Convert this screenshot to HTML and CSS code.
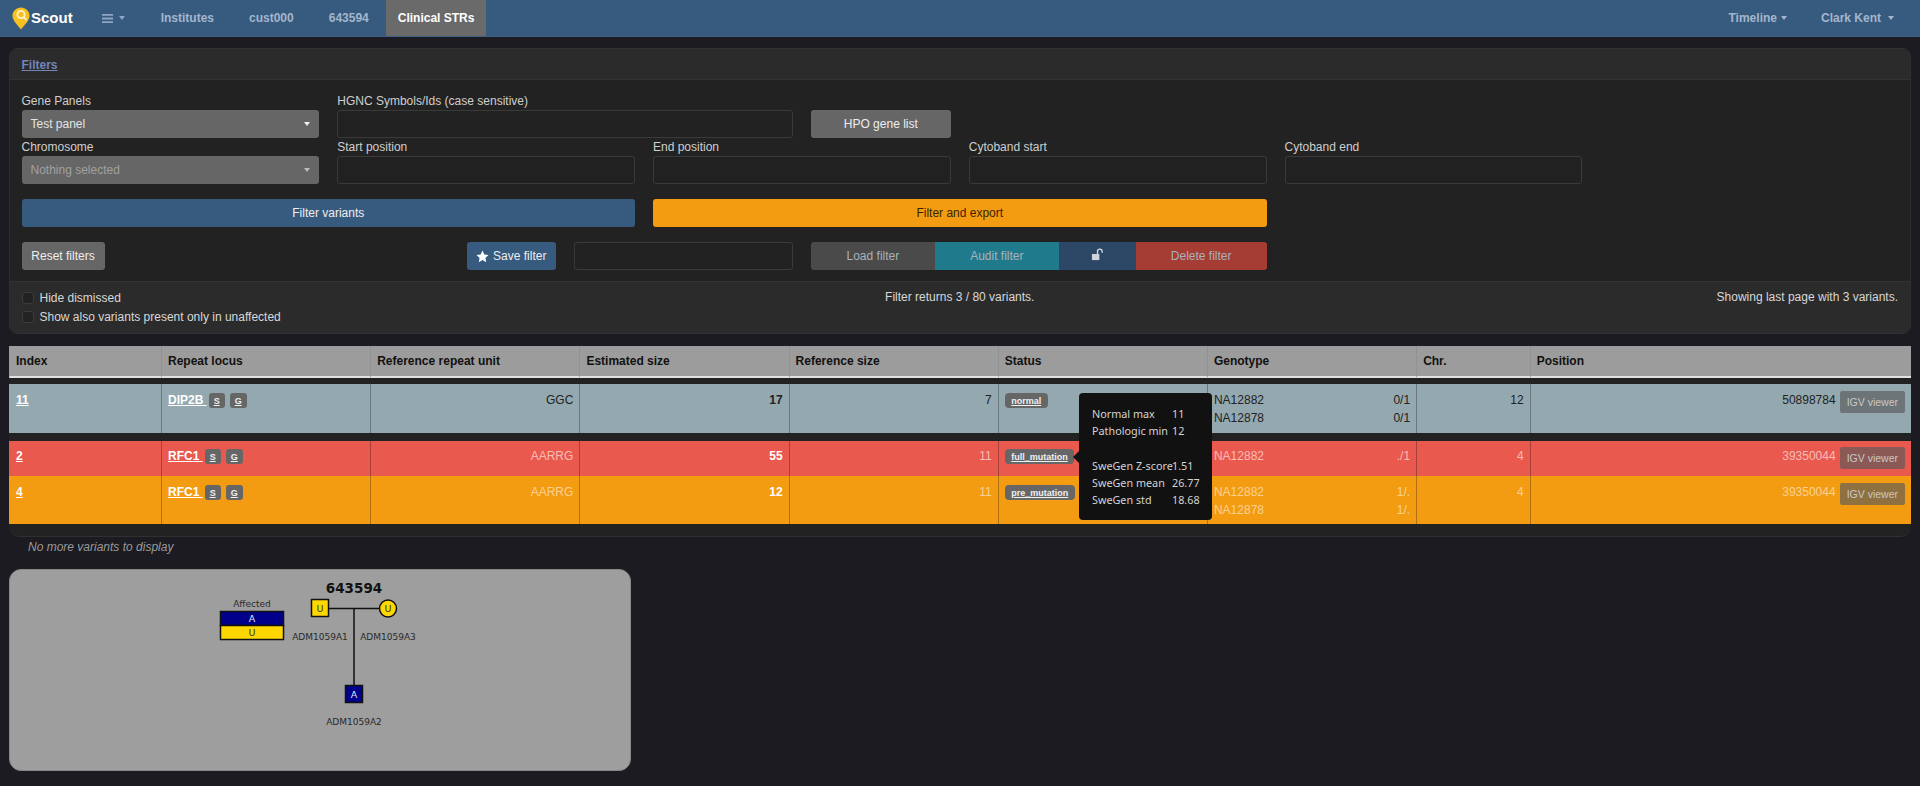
FILE: index.html
```html
<!DOCTYPE html>
<html lang="en">

<head>
    <meta charset="UTF-8">
    <meta name="viewport" content="width=device-width, initial-scale=1.0">
    <title>Scout - Clinical STRs</title>
    <link rel="stylesheet" href="styles.css">
</head>

<body>
    <!-- Top navigation -->
    <nav class="navbar">
        <a class="brand" href="#">
            <svg class="brand-pin" width="18" height="23" viewBox="0 0 18 23">
                <path d="M9 .5C4.2.5.5 4.2.5 8.8c0 4.6 4.4 8.6 8.5 13.7 4.1-5.1 8.5-9.100 8.500-13.700C17.500 4.200 13.800.5 9 .5z" fill="#f6c021"/>
                <circle cx="9" cy="7.500" r="3.600" fill="none" stroke="#fff4c8" stroke-width="1.800"/>
                <path d="M11.500 10l3 2.800" stroke="#fff4c8" stroke-width="1.800"/>
            </svg>
            <span>Scout</span>
        </a>
        <a class="menu-toggle" href="#">
            <svg width="11" height="11" viewBox="0 0 11 11">
                <path d="M0 1h11v1.800H0zM0 4.600h11v1.800H0zM0 8.200h11V10H0z" fill="#8fa6c2"/>
            </svg>
            <span class="caret"></span>
        </a>
        <a class="nav-link" href="#">Institutes</a>
        <a class="nav-link" href="#">cust000</a>
        <a class="nav-link" href="#">643594</a>
        <a class="nav-link active" href="#">Clinical STRs</a>
        <a class="nav-link nav-right" href="#">Timeline<span class="caret"></span></a>
        <a class="nav-link nav-user" href="#">Clark Kent<span class="caret"></span></a>
    </nav>

    <!-- Filter form -->
    <section class="card filters">
        <div class="card-header"><a href="#">Filters</a></div>
        <div class="card-body">
            <div class="form-row">
                <div class="field span-2">
                    <label>Gene Panels</label>
                    <div class="select">Test panel<span class="caret"></span></div>
                </div>
                <div class="field span-3">
                    <label>HGNC Symbols/Ids (case sensitive)</label>
                    <input type="text">
                </div>
                <div class="field span-1">
                    <label>&nbsp;</label>
                    <button class="btn btn-grey">HPO gene list</button>
                </div>
            </div>
            <div class="form-row">
                <div class="field span-2">
                    <label>Chromosome</label>
                    <div class="select disabled">Nothing selected<span class="caret"></span></div>
                </div>
                <div class="field span-2">
                    <label>Start position</label>
                    <input type="text">
                </div>
                <div class="field span-2">
                    <label>End position</label>
                    <input type="text">
                </div>
                <div class="field span-2">
                    <label>Cytoband start</label>
                    <input type="text">
                </div>
                <div class="field span-2">
                    <label>Cytoband end</label>
                    <input type="text">
                </div>
            </div>
            <div class="form-row action-row">
                <button class="btn btn-blue span-4">Filter variants</button>
                <button class="btn btn-orange span-4">Filter and export</button>
            </div>
            <div class="form-row action-row">
                <div class="span-2"><button class="btn btn-grey reset-btn">Reset filters</button></div>
                <div class="span-3 save-group">
                    <div class="save-cell">
                        <button class="btn btn-blue save-btn">
                            <svg width="13" height="13" viewBox="0 0 24 24">
                                <path d="M12 1l3.400 7.200 7.600 1-5.600 5.400 1.500 7.900L12 18.600l-6.900 3.900 1.500-7.900L1 9.200l7.600-1z" fill="#fff"/>
                            </svg>
                            Save filter
                        </button>
                    </div>
                    <input type="text">
                </div>
                <div class="btn-group span-3">
                    <button class="btn btn-dim load-btn">Load filter</button>
                    <button class="btn btn-teal audit-btn">Audit filter</button>
                    <button class="btn btn-navy lock-btn">
                        <svg width="13" height="13" viewBox="0 0 14 14">
                            <path d="M1 6.500h8v6.500H1z" fill="#cfd6de"/>
                            <path d="M7 6.500V3.600C7 2.100 8.100 1.200 9.500 1.200s2.500.9 2.500 2.400V5" fill="none" stroke="#cfd6de" stroke-width="1.500"/>
                        </svg>
                    </button>
                    <button class="btn btn-red delete-btn">Delete filter</button>
                </div>
            </div>
        </div>
        <div class="card-footer">
            <div class="footer-checks">
                <label class="check"><span class="checkbox"></span>Hide dismissed</label>
                <label class="check"><span class="checkbox"></span>Show also variants present only in unaffected</label>
            </div>
            <div class="footer-count">Filter returns 3 / 80 variants.</div>
            <div class="footer-page">Showing last page with 3 variants.</div>
        </div>
    </section>

    <!-- Variants table -->
    <section class="card table-card">
        <table class="variants">
            <colgroup>
                <col class="col-index">
                <col class="col-wide">
                <col class="col-wide">
                <col class="col-wide">
                <col class="col-wide">
                <col class="col-wide">
                <col class="col-wide">
                <col class="col-chr">
                <col>
            </colgroup>
            <thead>
                <tr>
                    <th>Index</th>
                    <th>Repeat locus</th>
                    <th>Reference repeat unit</th>
                    <th>Estimated size</th>
                    <th>Reference size</th>
                    <th>Status</th>
                    <th>Genotype</th>
                    <th>Chr.</th>
                    <th>Position</th>
                </tr>
            </thead>
            <tbody>
                <tr class="spacer-sm"><td colspan="9"></td></tr>
                <tr class="row-normal">
                    <td><a class="cell-link" href="#">11</a></td>
                    <td><a class="cell-link" href="#">DIP2B&nbsp;</a><a class="tag" href="#">S</a><a class="tag" href="#">G</a></td>
                    <td class="num">GGC</td>
                    <td class="num"><strong>17</strong></td>
                    <td class="num">7</td>
                    <td><a class="badge" href="#">normal</a></td>
                    <td>
                        <div class="geno"><span>NA12882</span><span>0/1</span></div>
                        <div class="geno"><span>NA12878</span><span>0/1</span></div>
                    </td>
                    <td class="num">12</td>
                    <td class="num">50898784<a class="igv" href="#">IGV viewer</a></td>
                </tr>
                <tr class="spacer-lg"><td colspan="9"></td></tr>
                <tr class="row-full">
                    <td><a class="cell-link" href="#">2</a></td>
                    <td><a class="cell-link" href="#">RFC1&nbsp;</a><a class="tag" href="#">S</a><a class="tag" href="#">G</a></td>
                    <td class="num">AARRG</td>
                    <td class="num"><strong>55</strong></td>
                    <td class="num">11</td>
                    <td><a class="badge" href="#">full_mutation</a></td>
                    <td>
                        <div class="geno"><span>NA12882</span><span>./1</span></div>
                    </td>
                    <td class="num">4</td>
                    <td class="num">39350044<a class="igv" href="#">IGV viewer</a></td>
                </tr>
                <tr class="row-pre">
                    <td><a class="cell-link" href="#">4</a></td>
                    <td><a class="cell-link" href="#">RFC1&nbsp;</a><a class="tag" href="#">S</a><a class="tag" href="#">G</a></td>
                    <td class="num">AARRG</td>
                    <td class="num"><strong>12</strong></td>
                    <td class="num">11</td>
                    <td><a class="badge" href="#">pre_mutation</a></td>
                    <td>
                        <div class="geno"><span>NA12882</span><span>1/.</span></div>
                        <div class="geno"><span>NA12878</span><span>1/.</span></div>
                    </td>
                    <td class="num">4</td>
                    <td class="num">39350044<a class="igv" href="#">IGV viewer</a></td>
                </tr>
            </tbody>
        </table>

        <div class="tooltip">
            <div class="tip-row"><span>Normal max</span><span>11</span></div>
            <div class="tip-row"><span>Pathologic min</span><span>12</span></div>
            <div class="tip-row">&nbsp;</div>
            <div class="tip-row"><span>SweGen Z-score</span><span>1.51</span></div>
            <div class="tip-row"><span>SweGen mean</span><span>26.77</span></div>
            <div class="tip-row"><span>SweGen std</span><span>18.68</span></div>
        </div>
    </section>

    <p class="no-more">No more variants to display</p>

    <!-- Pedigree -->
    <section class="pedigree">
        <svg width="622" height="202" viewBox="0 0 622 202">
            <text class="ped-title" x="345" y="24">643594</text>

            <text class="ped-label" x="243" y="38">Affected</text>
            <rect x="211.500" y="42.500" width="63" height="14" fill="#00008b" stroke="#111" stroke-width="1.500"/>
            <rect x="211.500" y="56.500" width="63" height="14" fill="#ffd700" stroke="#111" stroke-width="1.500"/>
            <text class="ped-mark light" x="243" y="53">A</text>
            <text class="ped-mark" x="243" y="67">U</text>

            <path d="M320 39.500h59M345 39.500v77" stroke="#111" stroke-width="1.500" fill="none"/>

            <rect x="302.500" y="30.500" width="17" height="17" fill="#ffd700" stroke="#111" stroke-width="1.500"/>
            <text class="ped-mark" x="311" y="43">U</text>
            <circle cx="379" cy="39.500" r="8.500" fill="#ffd700" stroke="#111" stroke-width="1.500"/>
            <text class="ped-mark" x="379" y="43">U</text>
            <rect x="336.500" y="116.500" width="17" height="17" fill="#00008b" stroke="#111" stroke-width="1.500"/>
            <text class="ped-mark light" x="345" y="129">A</text>

            <text class="ped-label" x="311" y="71">ADM1059A1</text>
            <text class="ped-label" x="379" y="71">ADM1059A3</text>
            <text class="ped-label" x="345" y="156">ADM1059A2</text>
        </svg>
    </section>
</body>

</html>
```
FILE: styles.css
```css
* {
    box-sizing: border-box;
}

body {
    font-family: "Liberation Sans", Arial, sans-serif;
    font-size: 12px;
    line-height: 18px;
    background-color: #1b1b21;
    color: #d8d8d8;
    margin: 0;
    padding: 0 9px 16px;
}

a {
    color: inherit;
}

.caret {
    display: inline-block;
    width: 0;
    height: 0;
    border-top: 4px solid currentColor;
    border-left: 3.5px solid transparent;
    border-right: 3.5px solid transparent;
}

/* Navbar */
.navbar {
    display: flex;
    align-items: center;
    height: 37px;
    margin: 0 -9px;
    padding-left: 12px;
    background-color: #375a7f;
    border-bottom: 1px solid #3f6286;
}

.brand {
    display: flex;
    align-items: center;
    gap: 1px;
    color: #fff;
    font-size: 15px;
    font-weight: bold;
    text-decoration: none;
}

.menu-toggle {
    display: flex;
    align-items: center;
    gap: 6px;
    margin-left: 29px;
    margin-right: 24px;
    color: #8fa6c2;
}

.nav-link {
    display: flex;
    align-items: center;
    height: 36px;
    padding: 0 12px;
    margin-right: 11px;
    color: #a3b6cc;
    font-weight: bold;
    text-decoration: none;
}

.nav-link .caret {
    margin-left: 4px;
}

.nav-link.active {
    margin-left: -6px;
    color: #fff;
    background-color: #6a6a6a;
}

.nav-right {
    margin-left: auto;
    margin-right: 10px;
}

.nav-user {
    margin-right: 14px;
}

.nav-user .caret {
    margin-left: 7px;
}

/* Cards */
.card {
    background-color: #222;
    border: 1px solid #303030;
    border-radius: 8px;
}

.filters {
    margin-top: 11px;
}

.card-header {
    height: 31px;
    padding: 7px 11.500px 0;
    background-color: #2b2b2b;
    border-bottom: 1px solid #333;
    border-radius: 8px 8px 0 0;
}

.card-header a {
    color: #7285bb;
    font-weight: bold;
}

.card-body {
    padding: 12px 12px 11px 11.500px;
}

.form-row {
    display: grid;
    grid-template-columns: repeat(12, 1fr);
    column-gap: 18px;
}

.action-row {
    margin-top: 15px;
}

.span-1 {
    grid-column: span 1;
}

.span-2 {
    grid-column: span 2;
}

.span-3 {
    grid-column: span 3;
}

.span-4 {
    grid-column: span 4;
}

.field label {
    display: block;
    height: 18px;
    color: #cfcfcf;
}

input[type="text"] {
    display: block;
    width: 100%;
    height: 28px;
    background-color: #212121;
    border: 1px solid #3a3a3a;
    border-radius: 3px;
}

.select {
    display: flex;
    align-items: center;
    justify-content: space-between;
    height: 28px;
    padding: 0 9px;
    background-color: #666;
    border-radius: 3px;
    color: #e4e4e4;
}

.select .caret {
    color: #f0f0f0;
}

.select.disabled {
    color: #a0a0a0;
}

.select.disabled .caret {
    color: #bbb;
}

.btn {
    height: 28px;
    padding: 0 9px;
    border: none;
    border-radius: 3px;
    font-family: inherit;
    font-size: 12px;
    color: #eee;
    white-space: nowrap;
}

.field .btn {
    width: 100%;
}

.btn-grey {
    background-color: #666;
}

.btn-blue {
    background-color: #375a7f;
}

.btn-orange {
    background-color: #f39c12;
    color: #3a2400;
}

.reset-btn {
    width: 83px;
}

.save-group {
    display: grid;
    grid-template-columns: 1fr 1fr;
    column-gap: 18px;
}

.save-cell {
    text-align: right;
}

.save-btn {
    display: inline-flex;
    align-items: center;
    gap: 4px;
    width: 89px;
}

.btn-group {
    display: flex;
}

.btn-group .btn {
    border-radius: 0;
    color: #a9b2ba;
}

.btn-group .btn:first-child {
    border-radius: 3px 0 0 3px;
}

.btn-group .btn:last-child {
    border-radius: 0 3px 3px 0;
}

.btn-dim {
    background-color: #4a4a4a;
}

.btn-teal {
    background-color: #1f7a8c;
}

.btn-navy {
    background-color: #2c4866;
}

.btn-red {
    background-color: #a63d35;
}

.load-btn,
.audit-btn {
    width: 124px;
}

.lock-btn {
    width: 77px;
}

.delete-btn {
    flex: 1;
}

.card-footer {
    display: grid;
    grid-template-columns: 1fr 1fr 1fr;
    height: 52px;
    padding: 6px 12px 0 11.500px;
    background-color: #2b2b2b;
    border-top: 1px solid #333;
    border-radius: 0 0 8px 8px;
}

.check {
    display: flex;
    align-items: center;
    gap: 6px;
    height: 19.500px;
    white-space: nowrap;
}

.checkbox {
    width: 12px;
    height: 12px;
    background-color: #222;
    border: 1px solid #3c3c3c;
    border-radius: 3px;
}

.footer-count {
    text-align: center;
    line-height: 19.500px;
}

.footer-page {
    text-align: right;
    line-height: 19.500px;
}

/* Variants table */
.table-card {
    position: relative;
    margin-top: 12px;
    padding-bottom: 12px;
    border-radius: 3px 3px 10px 10px;
    border-width: 0 0 1px;
}

.variants {
    width: 100%;
    table-layout: fixed;
    border-collapse: separate;
    border-spacing: 0;
    color: #222;
}

.col-index {
    width: 152px;
}

.col-wide {
    width: 209.200px;
}

.col-chr {
    width: 113.500px;
}

.variants th {
    height: 32px;
    padding: 0 6px;
    text-align: left;
    color: #111;
    background-color: #9c9c9c;
    border-left: 1px solid #919191;
    border-bottom: 2px solid #e2e2e2;
}

.variants td {
    padding: 7px 6px 0;
    vertical-align: top;
    border-left: 1px solid rgba(0, 0, 0, 0.28);
}

.variants th:first-child,
.variants td:first-child {
    border-left-color: transparent;
}

.variants .spacer-sm td,
.variants .spacer-lg td {
    padding: 0;
    border: none;
}

.spacer-sm td {
    height: 6px;
}

.spacer-lg td {
    height: 8px;
}

.row-normal td {
    height: 49px;
    background-color: #94a8b0;
}

.row-full td {
    height: 35px;
    padding-top: 6px;
    background-color: #e9594d;
    color: rgba(255, 255, 255, 0.6);
}

.row-pre td {
    height: 48px;
    padding-top: 7px;
    background-color: #f39c12;
    color: rgba(255, 255, 255, 0.55);
}

.row-full strong,
.row-pre strong {
    color: #fff;
}

.num {
    text-align: right;
}

.cell-link {
    color: #fff;
    font-weight: bold;
}

.tag {
    display: inline-block;
    height: 15px;
    margin-left: 5px;
    margin-top: 2px;
    padding: 0 5px;
    background-color: #666;
    border-radius: 3px;
    color: #f0f0f0;
    font-size: 9px;
    font-weight: bold;
    line-height: 16px;
    text-align: center;
    vertical-align: top;
}

.cell-link + .tag {
    margin-left: 2px;
}

.badge {
    display: inline-block;
    height: 15px;
    margin-top: 2px;
    padding: 0 6.500px;
    background-color: #666;
    border-radius: 4px;
    color: #f0f0f0;
    font-size: 9px;
    font-weight: bold;
    line-height: 16px;
    vertical-align: top;
}

.geno {
    display: flex;
    justify-content: space-between;
}

.igv {
    display: inline-block;
    height: 22px;
    margin-left: 4px;
    padding: 0 7px;
    background-color: rgba(90, 90, 90, 0.66);
    border-radius: 2px;
    color: #c8c8c8;
    font-size: 10.5px;
    line-height: 23px;
    text-decoration: none;
    vertical-align: top;
}

.tooltip {
    position: absolute;
    top: 47px;
    left: 1070px;
    width: 133px;
    height: 127px;
    padding: 12px 0 0 13px;
    background-color: #111;
    border-radius: 4px;
    color: #d4d4d4;
    font-family: "Noto Sans", sans-serif;
    font-size: 10.800px;
    line-height: 17.300px;
}

.tooltip::before {
    content: "";
    position: absolute;
    top: 58px;
    left: -6px;
    border-top: 6px solid transparent;
    border-bottom: 6px solid transparent;
    border-right: 6px solid #111;
}

.tip-row {
    display: grid;
    grid-template-columns: 80px auto;
    white-space: nowrap;
}

.no-more {
    height: 18px;
    margin: 1px 0 13px;
    padding-left: 19px;
    color: #9a9a9a;
    font-style: italic;
}

/* Pedigree */
.pedigree {
    width: 622px;
    height: 202px;
    background-color: #9e9e9e;
    border: 1px solid #888;
    border-radius: 12px;
}

.pedigree svg {
    display: block;
    margin: -1px;
}

.pedigree text {
    font-family: "DejaVu Sans", sans-serif;
    text-anchor: middle;
}

.ped-title {
    font-size: 13.500px;
    font-weight: bold;
    fill: #111;
}

.ped-label {
    font-size: 9px;
    fill: #2a2a2a;
}

.ped-mark {
    font-size: 9.500px;
    fill: #333;
}

.ped-mark.light {
    fill: #dfe3f5;
}
```
